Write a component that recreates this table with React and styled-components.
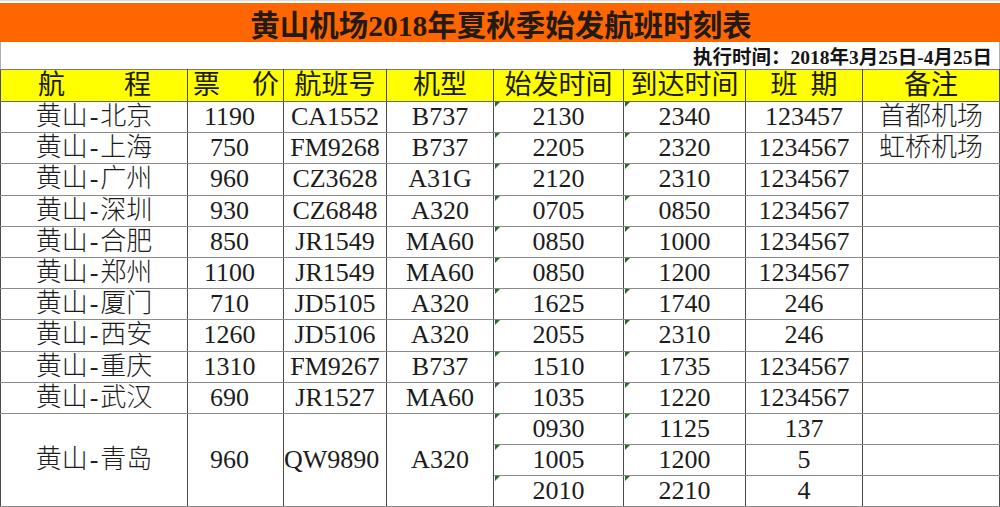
import React from "react";
import styled, { createGlobalStyle } from "styled-components";

const GlobalStyle = createGlobalStyle`
  html, body {
    margin: 0;
    padding: 0;
    background: #ffffff;
  }
  body {
    font-family: "Liberation Serif", "Noto Sans CJK SC", serif;
  }
`;

const Page = styled.div`
  width: 1000px;
  height: 507px;
  overflow: hidden;
  background: #ffffff;
  padding-top: 2px;
  box-sizing: border-box;
  border-top: 1px solid #d9d9d9;
`;

const TitleBar = styled.div`
  height: 39px;
  background: #ff6600;
  display: flex;
  align-items: center;
  justify-content: center;
  font-size: 29.5px;
  font-weight: 700;
  color: #231a12;
  padding-left: 2px;
  box-sizing: border-box;
`;

const SubRow = styled.div`
  height: 27px;
  display: flex;
  align-items: center;
  justify-content: flex-end;
  padding-right: 7px;
  font-size: 19.5px;
  font-weight: 700;
  color: #141414;
  border-left: 1px solid #b0b0b0;
  border-right: 1px solid #b0b0b0;
  box-sizing: border-box;
`;

const Table = styled.table`
  width: 999px;
  border-collapse: collapse;
  table-layout: fixed;
  font-size: 26px;
  font-weight: 300;
  color: #1c1c1c;
`;

const HeadRow = styled.tr`
  height: 32px;
  background: #ffff00;
`;

const Row = styled.tr`
  height: ${(p) => p.$h || 31.2}px;
`;

const Th = styled.th`
  font-weight: 400;
  font-size: 27px;
  line-height: 1;
  padding: 0;
  color: #1a1a00;
  border-left: 1px solid #4a4a4a;
  border-right: 1px solid #4a4a4a;
  border-top: 1px solid #7a7a7a;
  border-bottom: 1px solid #6a6a6a;
  white-space: nowrap;
`;

const Spread = styled.span`
  display: flex;
  justify-content: space-between;
  padding: 0 ${(p) => p.$right}px 0 ${(p) => p.$left}px;
`;

const Gap = styled.span`
  display: inline-block;
  width: ${(p) => p.$w}px;
`;

const Dash = styled.span`
  display: inline-block;
  padding: 0 2px;
`;

const Td = styled.td`
  position: relative;
  padding: 0 ${(p) => p.$pr || 0}px 0 0;
  text-align: center;
  line-height: 1;
  white-space: nowrap;
  font-weight: 300;
  border-left: 1px solid #4a4a4a;
  border-right: 1px solid #4a4a4a;
  border-top: 1px solid #8a8a8a;
  border-bottom: 1px solid #8a8a8a;

  ${(p) =>
    p.$flag &&
    `
    &::before {
      content: "";
      position: absolute;
      left: 1px;
      top: 0;
      width: 0;
      height: 0;
      border-top: 5px solid #2d6b2d;
      border-right: 5px solid transparent;
    }
  `}
`;

const cols = [187, 96, 103, 107, 130, 122, 117, 137];

const flights = [
  ["黄山-北京", "1190", "CA1552", "B737", "2130", "2340", "123457", "首都机场"],
  ["黄山-上海", "750", "FM9268", "B737", "2205", "2320", "1234567", "虹桥机场"],
  ["黄山-广州", "960", "CZ3628", "A31G", "2120", "2310", "1234567", ""],
  ["黄山-深圳", "930", "CZ6848", "A320", "0705", "0850", "1234567", ""],
  ["黄山-合肥", "850", "JR1549", "MA60", "0850", "1000", "1234567", ""],
  ["黄山-郑州", "1100", "JR1549", "MA60", "0850", "1200", "1234567", ""],
  ["黄山-厦门", "710", "JD5105", "A320", "1625", "1740", "246", ""],
  ["黄山-西安", "1260", "JD5106", "A320", "2055", "2310", "246", ""],
  ["黄山-重庆", "1310", "FM9267", "B737", "1510", "1735", "1234567", ""],
  ["黄山-武汉", "690", "JR1527", "MA60", "1035", "1220", "1234567", ""],
];

const qingdao = {
  route: "黄山-青岛",
  price: "960",
  flight: "QW9890",
  type: "A320",
  legs: [
    ["0930", "1125", "137"],
    ["1005", "1200", "5"],
    ["2010", "2210", "4"],
  ],
};

const Route = ({ name }) => {
  const [from, to] = name.split("-");
  return (
    <>
      {from}
      <Dash>-</Dash>
      {to}
    </>
  );
};

export default function App() {
  return (
    <>
      <GlobalStyle />
      <Page>
        <TitleBar>黄山机场2018年夏秋季始发航班时刻表</TitleBar>
        <SubRow>执行时间：2018年3月25日-4月25日</SubRow>
        <Table>
          <colgroup>
            {cols.map((w, i) => (
              <col key={i} style={{ width: w }} />
            ))}
          </colgroup>
          <thead>
            <HeadRow>
              <Th>
                <Spread $left={37} $right={36}>
                  <span>航</span>
                  <span>程</span>
                </Spread>
              </Th>
              <Th>
                <Spread $left={5} $right={4}>
                  <span>票</span>
                  <span>价</span>
                </Spread>
              </Th>
              <Th>航班号</Th>
              <Th>机型</Th>
              <Th>始发时间</Th>
              <Th>到达时间</Th>
              <Th>
                班<Gap $w={13} />期
              </Th>
              <Th>备注</Th>
            </HeadRow>
          </thead>
          <tbody>
            {flights.map((f) => (
              <Row key={f[0]}>
                <Td>
                  <Route name={f[0]} />
                </Td>
                <Td $pr={12}>{f[1]}</Td>
                <Td>{f[2]}</Td>
                <Td>{f[3]}</Td>
                <Td $flag>{f[4]}</Td>
                <Td $flag>{f[5]}</Td>
                <Td>{f[6]}</Td>
                <Td>{f[7]}</Td>
              </Row>
            ))}
            {qingdao.legs.map((leg, i) => (
              <Row key={leg[0]}>
                {i === 0 && (
                  <>
                    <Td rowSpan={3}>
                      <Route name={qingdao.route} />
                    </Td>
                    <Td rowSpan={3} $pr={12}>
                      {qingdao.price}
                    </Td>
                    <Td rowSpan={3} $pr={12}>
                      {qingdao.flight}
                    </Td>
                    <Td rowSpan={3}>{qingdao.type}</Td>
                  </>
                )}
                <Td $flag>{leg[0]}</Td>
                <Td $flag>{leg[1]}</Td>
                <Td>{leg[2]}</Td>
                <Td></Td>
              </Row>
            ))}
          </tbody>
        </Table>
      </Page>
    </>
  );
}
